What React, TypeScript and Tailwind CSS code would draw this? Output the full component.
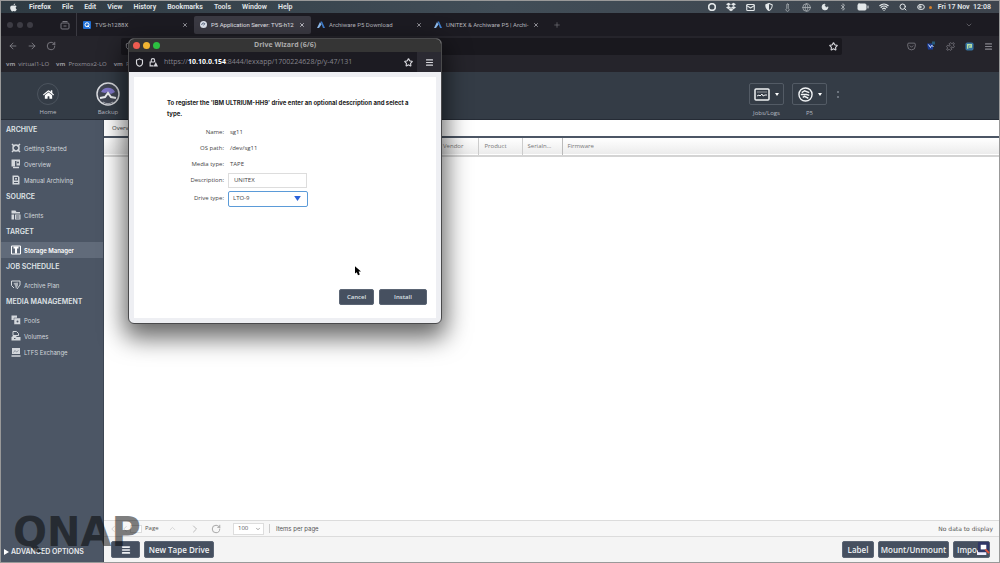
import type { ReactNode } from "react";
import {
  ArrowLeft,
  ArrowRight,
  RotateCw,
  Star,
  Menu,
  Shield,
  X,
  Plus,
  ChevronDown,
  ChevronRight,
  ChevronLeft,
  ChevronUp,
  Wifi,
  Search,
  Moon,
  Bluetooth,
  BatteryFull,
  Puzzle,
  Globe,
  Thermometer,
  Mail,
  Pocket,
  Circle,
  ToggleLeft,
} from "lucide-react";
import { FaApple, FaDropbox, FaShieldAlt, FaHome } from "react-icons/fa";

const menus = ["File", "Edit", "View", "History", "Bookmarks", "Tools", "Window", "Help"];

const tabs = [
  { title: "TVS-h1288X", icon: "qnap", active: false },
  { title: "P5 Application Server: TVS-h12", icon: "p5", active: true },
  { title: "Archiware P5 Download", icon: "arch", active: false },
  { title: "UNITEX & Archiware P5 | Archi-", icon: "arch", active: false },
];

const bookmarks = ["virtual1-LO", "Proxmox2-LO", "Pro"];

const icons: Record<string, ReactNode> = {
  start: (
    <>
      <circle cx="10" cy="10" r="6" fill="none" stroke="currentColor" strokeWidth="3" />
      <path d="M2 2l5 5M18 2l-5 5M2 18l5-5M18 18l-5-5" stroke="currentColor" strokeWidth="3" />
    </>
  ),
  overview: (
    <>
      <path d="M1 1h17v12h-7V4H8v11H1z" fill="currentColor" />
      <path d="M4 17h12" stroke="currentColor" strokeWidth="3" />
      <circle cx="14" cy="7" r="2" fill="#4c5665" />
    </>
  ),
  archiving: (
    <>
      <path d="M3 1h11l3 3v15H3z" fill="currentColor" />
      <rect x="6" y="4" width="8" height="7" fill="#4c5665" />
      <circle cx="10" cy="7.500" r="2" fill="currentColor" />
      <path d="M6 15h8" stroke="#4c5665" strokeWidth="2" />
    </>
  ),
  clients: (
    <>
      <path d="M1 1h8l2 3h7v3H1zM1 9h5v10H1zM8 9h11v10H8z" fill="currentColor" />
      <path d="M10 12h7M10 16h7" stroke="#4c5665" strokeWidth="2" />
    </>
  ),
  storage: (
    <>
      <path d="M1 2h18v16H1z" fill="none" stroke="currentColor" strokeWidth="2" />
      <path d="M5 5h10M10 5v12" stroke="currentColor" strokeWidth="4" />
    </>
  ),
  plan: (
    <>
      <path d="M1 2h17v8M1 2v9l5 5" fill="none" stroke="currentColor" strokeWidth="2" />
      <path d="M5 6l9-1v6l-4 7-2-7z" fill="currentColor" opacity="0.7" />
      <path d="M12 18l6-8" stroke="currentColor" strokeWidth="2" />
    </>
  ),
  pools: (
    <>
      <path d="M1 1h11v9H1z" fill="currentColor" />
      <path d="M6 6h13v13H6z" fill="currentColor" stroke="#4c5665" strokeWidth="1" />
      <circle cx="13" cy="13" r="2" fill="#4c5665" />
    </>
  ),
  volumes: (
    <>
      <path d="M4 1h7l4 4v4H4z" fill="none" stroke="currentColor" strokeWidth="2" />
      <path d="M1 12l6-4 5 4h7v7H1z" fill="currentColor" />
      <path d="M6 15h3" stroke="#4c5665" strokeWidth="2" />
    </>
  ),
  ltfs: (
    <>
      <path d="M2 2h16v12H2z" fill="currentColor" />
      <path d="M5 11l3-4 3 3 4-3" stroke="#4c5665" strokeWidth="1" fill="none" />
      <path d="M1 18h18" stroke="currentColor" strokeWidth="3" />
    </>
  ),
};

const sections = [
  {
    title: "ARCHIVE",
    items: [
      { label: "Getting Started", icon: "start" },
      { label: "Overview", icon: "overview" },
      { label: "Manual Archiving", icon: "archiving" },
    ],
  },
  { title: "SOURCE", items: [{ label: "Clients", icon: "clients" }] },
  { title: "TARGET", items: [{ label: "Storage Manager", icon: "storage", active: true }] },
  { title: "JOB SCHEDULE", items: [{ label: "Archive Plan", icon: "plan" }] },
  {
    title: "MEDIA MANAGEMENT",
    items: [
      { label: "Pools", icon: "pools" },
      { label: "Volumes", icon: "volumes" },
      { label: "LTFS Exchange", icon: "ltfs" },
    ],
  },
];

function MenuBar() {
  return (
    <header className="flex h-3 shrink-0 items-center justify-between bg-gradient-to-r from-[#2f3b43] via-[#414d57] to-[#3d444d] pr-2 pl-2 font-[Roboto,sans-serif] text-[7px] font-semibold text-[#e4e8ea]">
      <nav className="flex items-center gap-[11px]">
        <FaApple className="size-[9px]" />
        <span className="font-bold">Firefox</span>
        {menus.map((m) => (
          <span key={m}>{m}</span>
        ))}
      </nav>
      <div className="flex items-center gap-[10px]">
        <Circle className="size-2" strokeWidth={5} />
        <FaDropbox className="size-[10px]" />
        <Mail className="size-[9px]" strokeWidth={3} />
        <FaShieldAlt className="size-2" />
        <Thermometer className="size-[9px] opacity-70" />
        <Globe className="size-[9px] opacity-70" />
        <Moon className="size-2" fill="currentColor" />
        <Bluetooth className="size-2 opacity-80" />
        <BatteryFull className="size-3" fill="currentColor" />
        <Wifi className="size-[10px]" strokeWidth={3} />
        <Search className="size-2" strokeWidth={3} />
        <span className="flex items-center gap-1">
          <ToggleLeft className="size-2" strokeWidth={3} />
          <span className="size-[3px] rounded-full bg-[#d9822b]" />
        </span>
        <span className="-ml-1 whitespace-nowrap">Fri 17 Nov&nbsp; 12:08</span>
      </div>
    </header>
  );
}

function TabIcon({ kind }: { kind: string }) {
  if (kind === "qnap") {
    return (
      <svg viewBox="0 0 16 16" className="size-2 shrink-0">
        <rect width="16" height="16" rx="2" fill="#1f6fd6" />
        <circle cx="8" cy="7.500" r="4" fill="none" stroke="#fff" strokeWidth="2" />
        <path d="M9 9l4 4" stroke="#fff" strokeWidth="2" />
      </svg>
    );
  }
  if (kind === "p5") {
    return (
      <svg viewBox="0 0 16 16" className="size-[7px] shrink-0">
        <circle cx="8" cy="8" r="8" fill="#dfe4ee" />
        <path d="M4 9a4 4 0 0 1 7-3M8 10l3-4" stroke="#44516b" strokeWidth="2" fill="none" />
      </svg>
    );
  }
  return (
    <svg viewBox="0 0 16 16" className="size-2 shrink-0">
      <path d="M7 1h3l6 13h-4z" fill="#3f7fd0" />
      <path d="M6 2l3 5-5 7H0z" fill="#8fbdf0" />
    </svg>
  );
}

function BrowserChrome() {
  return (
    <div className="shrink-0 text-[6px] text-[#b3b3ba]">
      <div className="flex h-[23px] items-center bg-[#1c1b22]">
        <div className="flex h-full w-[76px] items-center gap-1 border-r border-[#3a3941] pl-[6px]">
          <span className="size-[6px] rounded-full bg-[#3d3c44]" />
          <span className="size-[6px] rounded-full bg-[#3d3c44]" />
          <span className="size-[6px] rounded-full bg-[#3d3c44]" />
          <svg viewBox="0 0 20 20" className="mr-[6px] ml-auto size-[10px]" fill="none" stroke="#77767e" strokeWidth="2">
            <rect x="2" y="6" width="16" height="12" rx="2" />
            <path d="M5 3h10M7 12h6" />
          </svg>
        </div>
        {tabs.map((tab) => (
          <div
            key={tab.title}
            className={`flex h-[18px] w-[117px] items-center gap-1 rounded-xs px-[6px] font-[Roboto,sans-serif] ${tab.active ? "bg-[#3b3a43] text-[#e2e2e8]" : ""}`}
          >
            <TabIcon kind={tab.icon} />
            <span className="flex-1 whitespace-nowrap">{tab.title}</span>
            <button aria-label="Close tab">
              <X className="size-[6px]" strokeWidth={3} />
            </button>
          </div>
        ))}
        <button aria-label="New tab" className="ml-2">
          <Plus className="size-2 opacity-60" />
        </button>
        <ChevronDown className="mr-[26px] ml-auto size-2 opacity-60" />
      </div>
      <div className="flex h-5 items-center bg-[#25242b] pr-[6px] pl-[7px]">
        <div className="flex w-[113px] items-center gap-[9px] text-[#85848c]">
          <ArrowLeft className="size-[10px]" />
          <ArrowRight className="size-[10px]" />
          <RotateCw className="size-[10px]" />
        </div>
        <div className="flex h-[17px] flex-1 items-center justify-between rounded-xs bg-[#19181e] px-1">
          <Shield className="size-2" />
          <Star className="size-[9px] text-[#d5d5da]" strokeWidth={3} />
        </div>
        <div className="ml-[65px] flex items-center gap-[10px] text-[#85848c]">
          <Pocket className="size-[9px]" />
          <svg viewBox="0 0 20 20" className="size-[10px]">
            <path d="M2 5h12v12H4z" fill="#1b3d96" />
            <path d="M5 7l4 6 2-4 4 2" stroke="#cfe0ff" strokeWidth="2" fill="none" />
            <path d="M12 1h6v6h-6z" fill="#275a77" />
          </svg>
          <Puzzle className="size-[9px]" />
          <svg viewBox="0 0 20 20" className="size-[9px]">
            <rect x="1" y="1" width="18" height="18" rx="4" fill="#3673a0" />
            <path d="M6 15V6h8v5H9" stroke="#b9dfa0" strokeWidth="3" fill="none" />
          </svg>
          <Menu className="size-[9px]" strokeWidth={3} />
        </div>
      </div>
      <div className="flex h-4 items-center gap-[7px] bg-[#25242b] pl-[5px] text-[#96959d]">
        {bookmarks.map((b) => (
          <a key={b} href="#" className="flex gap-[3px] whitespace-nowrap">
            <span className="font-bold">vm</span>
            {b}
          </a>
        ))}
      </div>
    </div>
  );
}

function HeaderMenu({ label, children }: { label: string; children: ReactNode }) {
  return (
    <div className="flex w-[35px] flex-col items-center gap-[5px]">
      <button aria-label={label} className="flex h-[22px] w-full items-center justify-center gap-[5px] rounded-xs border border-[#535b65]">
        {children}
        <svg viewBox="0 0 8 6" className="h-[3px] w-1">
          <path d="M0 0h8L4 6z" fill="#fff" />
        </svg>
      </button>
      <span className="whitespace-nowrap">{label}</span>
    </div>
  );
}

function AppHeader() {
  return (
    <div className="flex h-12 shrink-0 justify-between border-b border-[#252b35] bg-[#343c46] pr-[160px] pl-8 text-[6px] leading-[7px] text-[#b6bbc1]">
      <div className="flex items-end gap-[30px] pb-[3px]">
        <a href="#" className="flex w-[30px] flex-col items-center gap-1">
          <span className="flex size-[22px] items-center justify-center rounded-full border border-[#4c545e]">
            <FaHome className="size-[11px] text-white" />
          </span>
          Home
        </a>
        <a href="#" className="flex w-[30px] flex-col items-center gap-[3px]">
          <svg viewBox="0 0 24 24" className="size-6" fill="none">
            <circle cx="12" cy="12" r="11" fill="#414653" stroke="#d8dade" strokeWidth="1.500" />
            <path d="M5 10a8 8 0 0 1 14 0l-4 2a5 5 0 0 0-6-1z" fill="#8177c9" />
            <path d="M4 16l5-1 3-4 3 4 5 1" stroke="#eef0f2" strokeWidth="2" />
            <path d="M7 20a9 9 0 0 0 10 0" stroke="#a9adb5" />
          </svg>
          Backup
        </a>
      </div>
      <div className="flex items-start gap-2 pt-[11px]">
        <HeaderMenu label="Jobs/Logs">
          <svg viewBox="0 0 16 13" className="h-[13px] w-4" fill="none" stroke="#f0f2f4">
            <rect x="1" y="1" width="14" height="11" rx="1" strokeWidth="1.500" />
            <path d="M3 4h10" opacity="0.5" />
            <path d="M3 8l2-1 1 1 2-2 1 2 2-1h2" />
          </svg>
        </HeaderMenu>
        <HeaderMenu label="P5">
          <svg viewBox="0 0 16 16" className="size-[15px]" fill="none" stroke="#f0f2f4">
            <circle cx="8" cy="8" r="7" strokeWidth="1.500" />
            <path d="M4 6l3-2 5 2M3 8h6l3 1M5 11l2-1 4 2" strokeWidth="1.500" />
          </svg>
        </HeaderMenu>
        <div className="flex h-[22px] flex-col items-center justify-center gap-[3px] pl-[2px]">
          <span className="size-[2px] bg-[#6c747e]" />
          <span className="size-[2px] bg-[#6c747e]" />
        </div>
      </div>
    </div>
  );
}

function Sidebar() {
  return (
    <aside className="flex w-[103px] shrink-0 flex-col border-r border-[#3d4653] bg-[#4c5665] pt-px font-[Inter,sans-serif] text-[6px] text-[#d3d7dc]">
      {sections.map((s) => (
        <section key={s.title}>
          <h2 className="flex h-[19px] items-center pl-[5px] text-[7px] font-semibold text-[#dfe2e6]">{s.title}</h2>
          {s.items.map(({ label, icon, ...rest }) => (
            <a
              key={label}
              href="#"
              className={`flex h-4 items-center gap-[3px] pl-[10px] ${"active" in rest ? "bg-[#616b7a] font-semibold text-white" : ""}`}
            >
              <svg viewBox="0 0 20 20" className="size-[10px]">
                {icons[icon]}
              </svg>
              {label}
            </a>
          ))}
        </section>
      ))}
      <button className="mt-auto flex items-center gap-[2px] pb-[6px] pl-[3px] text-[7px] leading-[8px] font-semibold text-[#e8eaed]">
        <svg viewBox="0 0 5 6" className="h-[6px] w-[5px]">
          <path d="M0 0l5 3-5 3z" fill="#fff" />
        </svg>
        ADVANCED OPTIONS
      </button>
    </aside>
  );
}

function BarButton({ children, className = "" }: { children: ReactNode; className?: string }) {
  return (
    <button
      className={`flex h-[17px] items-center justify-center rounded-xs border border-[#5b6574] bg-[#465060] text-[8px] font-semibold whitespace-nowrap text-[#eef0f3] ${className}`}
    >
      {children}
    </button>
  );
}

function StorageManager() {
  return (
    <main className="flex min-w-0 flex-1 flex-col bg-white text-[6px] text-[#555]">
      <div className="flex h-[18px] shrink-0 items-center border-b-2 border-[#4c5665] pl-2">
        <a href="#" className="text-[#444]">Overview</a>
      </div>
      <table className="w-full table-fixed text-left">
        <thead>
          <tr className="h-[18px] border-b-2 border-[#d4d4d4] bg-gradient-to-b from-white to-[#ececec] text-[#777]">
            <th className="w-[334px]" />
            <th className="w-10 border-r border-[#ccc] pl-[5px] font-normal">Vendor</th>
            <th className="w-11 border-r border-[#ccc] pl-[6px] font-normal">Product</th>
            <th className="w-10 border-r border-[#bbb] pl-[5px] font-normal">Serialn...</th>
            <th className="pl-[5px] font-normal">Firmware</th>
          </tr>
        </thead>
      </table>
      <div className="flex-1" />
      <div className="flex h-[17px] shrink-0 items-center justify-between border-y border-[#dcdcdc] bg-[#f7f7f7] pr-[6px] pl-1">
        <div className="flex items-center">
          <ChevronLeft className="size-[10px] text-[#ccc]" />
          <ChevronLeft className="ml-[2px] size-[10px] text-[#ccc]" />
          <input aria-label="Page number" className="h-2 w-3 border border-[#ddd] bg-white" />
          <span className="w-[22px] pl-[3px]">Page</span>
          <ChevronUp className="ml-1 size-[9px] text-[#ccc]" />
          <ChevronRight className="ml-[12px] size-3 text-[#bbb]" />
          <RotateCw className="ml-[10px] size-[10px] text-[#999]" />
          <div className="relative ml-3 flex items-center">
            <select aria-label="Items per page" className="h-3 w-[31px] appearance-none border border-[#ddd] bg-white pl-1">
              <option>100</option>
            </select>
            <ChevronDown className="pointer-events-none absolute right-[3px] size-[6px]" />
          </div>
          <span className="ml-[5px] border-l border-[#ccc] pl-[6px] font-[Inter,sans-serif]">Items per page</span>
        </div>
        <span className="font-['DejaVu_Sans',sans-serif]">No data to display</span>
      </div>
      <div className="flex h-[25px] shrink-0 items-center gap-1 bg-[#f4f4f4] pr-[9px] pl-[7px]">
        <BarButton className="w-[29px]">
          <Menu className="size-[10px]" strokeWidth={4} />
        </BarButton>
        <BarButton className="w-[70px]">New Tape Drive</BarButton>
        <BarButton className="ml-auto w-8">Label</BarButton>
        <BarButton className="w-[71px]">Mount/Unmount</BarButton>
        <div className="relative">
          <BarButton className="w-[37px] pr-[9px]">Impo</BarButton>
          <svg viewBox="0 0 14 14" className="absolute top-px right-0 size-[13px]">
            <path d="M0 9h10v5H0z" fill="#eef" />
            <rect x="1" y="0" width="12" height="11" rx="1" fill="#303766" />
            <rect x="4" y="3" width="6" height="5" fill="#fff" />
            <path d="M9 8l4 4" stroke="#e2533c" strokeWidth="2" />
          </svg>
        </div>
      </div>
    </main>
  );
}

function Field({ label, children }: { label: string; children: ReactNode }) {
  return (
    <div className="flex h-4 items-center">
      <span className="w-[94px] pr-[4px] text-right">{label}:</span>
      {children}
    </div>
  );
}

function DriveWizard() {
  return (
    <div
      role="dialog"
      aria-label="Drive Wizard"
      className="absolute top-[37px] left-[127px] flex h-[286px] w-[314px] flex-col overflow-hidden rounded-md border border-[#4a4a4c] bg-[#eeeff3] text-[6px] shadow-[0_10px_24px_4px_rgba(0,0,0,0.6)]"
    >
      <div className="flex h-[13px] shrink-0 items-center bg-[#353535] pl-1">
        <div className="flex w-10 gap-[3px]">
          <span className="size-[7px] rounded-full bg-[#ee5b50]" />
          <span className="size-[7px] rounded-full bg-[#f0b432]" />
          <span className="size-[7px] rounded-full bg-[#2cc041]" />
        </div>
        <h1 className="flex-1 pr-11 text-center text-[7px] font-bold text-[#aaa]">Drive Wizard (6/6)</h1>
      </div>
      <div className="flex h-5 shrink-0 items-center bg-[#1c1b22] pl-[6px] text-[#d8d8dd]">
        <Shield className="size-[9px]" strokeWidth={3} />
        <svg viewBox="0 0 16 16" className="ml-[5px] size-[9px]" fill="none" stroke="currentColor" strokeWidth="2">
          <path d="M4 7V4a3 3 0 0 1 6 0v3M8 14H2V7h8" />
          <path d="M12 7l4 8H8z" fill="currentColor" stroke="none" />
        </svg>
        <p className="ml-[6px] flex-1 text-[7px] text-[#85848c]">
          https://<b className="text-white">10.10.0.154</b>:8444/lexxapp/1700224628/p/y-47/131
        </p>
        <Star className="mr-1 size-[9px]" strokeWidth={3} />
        <div className="flex h-full w-6 items-center justify-center bg-[#2b2a32]">
          <Menu className="size-[9px]" strokeWidth={3} />
        </div>
      </div>
      <form className="m-[5px] flex flex-1 flex-col bg-white pt-5 pr-[9px] pb-[13px] pl-[33px] text-[#444]">
        <p className="font-[Inter,sans-serif] text-[6px] leading-[11px] font-bold text-[#222]">
          To register the 'IBM ULTRIUM-HH9' drive enter an optional description and select a
          <br />
          type.
        </p>
        <div className="-ml-[33px] flex flex-col pt-[5px]">
          <Field label="Name"><span className="pl-[2px]">sg11</span></Field>
          <Field label="OS path"><span className="pl-[2px]">/dev/sg11</span></Field>
          <Field label="Media type"><span className="pl-[2px]">TAPE</span></Field>
          <label className="flex h-4 items-center">
            <span className="w-[94px] pr-[4px] text-right">Description:</span>
            <input defaultValue="UNITEX" className="h-[15px] w-[79px] border border-[#ddd] pl-[5px] outline-none" />
          </label>
          <label className="relative mt-[2px] flex h-[17px] items-center">
            <span className="w-[94px] pr-[4px] text-right">Drive type:</span>
            <select className="h-4 w-20 appearance-none rounded-xs border border-[#5b9bd8] bg-white pl-1 outline-none">
              <option>LTO-9</option>
            </select>
            <svg viewBox="0 0 8 6" className="pointer-events-none absolute left-[160px] h-[5px] w-[7px]">
              <path d="M0 0h8L4 6z" fill="#2b62d9" />
            </svg>
          </label>
        </div>
        <div className="mt-auto flex justify-end gap-[5px]">
          <button type="button" className="h-4 w-[35px] rounded-xs border border-[#5b6574] bg-[#465060] font-semibold text-[#dfe2e6]">
            Cancel
          </button>
          <button type="button" className="h-4 w-12 rounded-xs border border-[#5b6574] bg-[#465060] font-semibold text-[#dfe2e6]">
            Install
          </button>
        </div>
      </form>
    </div>
  );
}

export default function App() {
  return (
    <div className="relative flex h-screen flex-col overflow-hidden border border-[#999] bg-white font-['Open_Sans',sans-serif]">
      <MenuBar />
      <BrowserChrome />
      <AppHeader />
      <div className="flex min-h-0 flex-1">
        <Sidebar />
        <StorageManager />
      </div>
      <DriveWizard />
      <svg viewBox="0 0 10 16" className="absolute top-[265px] left-[354px] h-[10px] w-[6px]">
        <path d="M0 0v12l3-2 2 5 3-1-2-5h4z" fill="#000" />
      </svg>
      <div className="pointer-events-none absolute bottom-[17px] left-3 font-['DejaVu_Sans',sans-serif] text-[40px] leading-[26px] font-bold text-black/50">
        QNAP
      </div>
    </div>
  );
}
